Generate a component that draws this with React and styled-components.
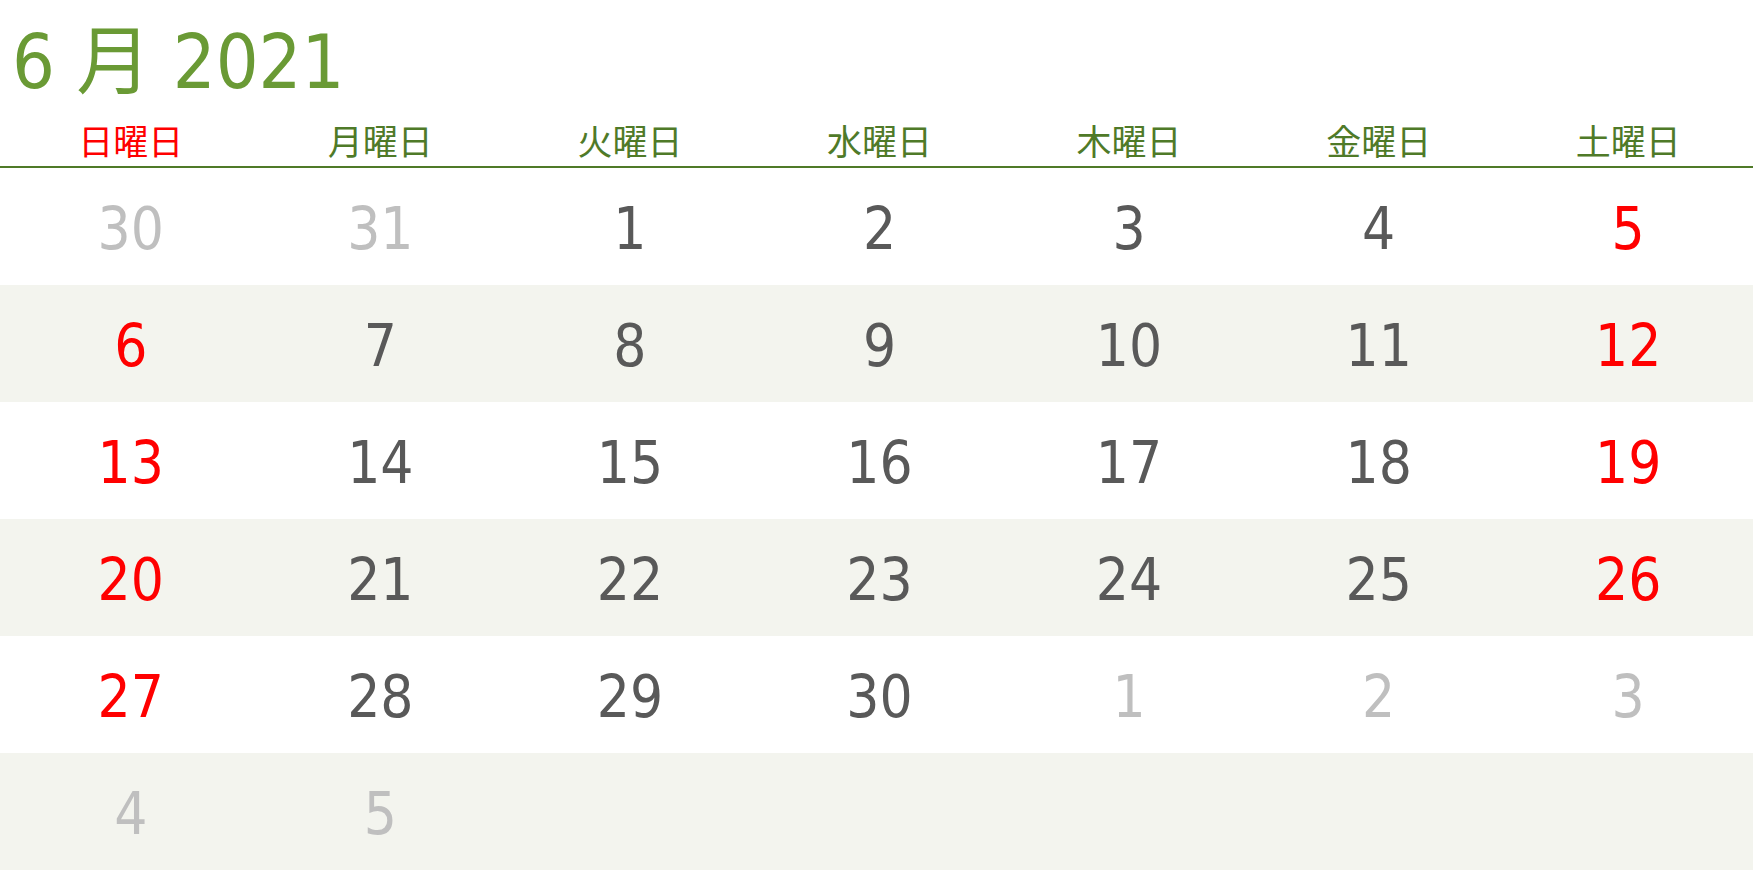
import styled, { createGlobalStyle } from 'styled-components';

const GlobalStyle = createGlobalStyle`
  html, body {
    margin: 0;
    padding: 0;
    background: #ffffff;
  }
  body {
    font-family: "DejaVu Sans Condensed", "DejaVu Sans", "Noto Sans CJK JP", sans-serif;
  }
`;

const Page = styled.div`
  width: 1753px;
  height: 871px;
  overflow: hidden;
  background: #ffffff;
`;

const Title = styled.h1`
  margin: 0;
  padding-left: 12px;
  font-family: "DejaVu Sans Condensed", "DejaVu Sans", "Noto Sans CJK JP", sans-serif;
  font-stretch: condensed;
  font-weight: 400;
  font-size: 75px;
  line-height: 125px;
  height: 125px;
  color: #6a9a35;
  white-space: pre;
`;

const Week = styled.div`
  display: grid;
  grid-template-columns: repeat(7, 1fr);
  padding-left: 6px;
  height: 41px;
  border-bottom: 2px solid #4f7a28;
`;

const DayName = styled.div`
  text-align: center;
  font-family: "Noto Sans CJK JP", sans-serif;
  font-size: 35px;
  line-height: 30px;
  color: ${(p) => (p.$sun ? '#ff0000' : '#4f7a28')};
`;

const Row = styled.div`
  display: grid;
  grid-template-columns: repeat(7, 1fr);
  padding-left: 6px;
  height: 117px;
  align-items: center;
  background: ${(p) => (p.$shade ? '#f3f4ee' : '#ffffff')};
`;

const Day = styled.div`
  text-align: center;
  font-family: "DejaVu Sans Condensed", "DejaVu Sans", sans-serif;
  font-stretch: condensed;
  font-size: 58px;
  line-height: 1;
  padding-top: 5px;
  color: ${(p) =>
    p.$muted ? '#bfbfbf' : p.$red ? '#ff0000' : '#595959'};
`;

const dayNames = ['日曜日', '月曜日', '火曜日', '水曜日', '木曜日', '金曜日', '土曜日'];

// [number, in-month]
const weeks = [
  [[30, false], [31, false], [1, true], [2, true], [3, true], [4, true], [5, true]],
  [[6, true], [7, true], [8, true], [9, true], [10, true], [11, true], [12, true]],
  [[13, true], [14, true], [15, true], [16, true], [17, true], [18, true], [19, true]],
  [[20, true], [21, true], [22, true], [23, true], [24, true], [25, true], [26, true]],
  [[27, true], [28, true], [29, true], [30, true], [1, false], [2, false], [3, false]],
  [[4, false], [5, false], null, null, null, null, null],
];

export default function App() {
  return (
    <Page>
      <GlobalStyle />
      <Title>6 月 2021</Title>
      <Week>
        {dayNames.map((d, i) => (
          <DayName key={d} $sun={i === 0}>
            {d}
          </DayName>
        ))}
      </Week>
      {weeks.map((w, r) => (
        <Row key={r} $shade={r % 2 === 1}>
          {w.map((c, i) =>
            c ? (
              <Day key={i} $muted={!c[1]} $red={i === 0 || i === 6}>
                {c[0]}
              </Day>
            ) : (
              <Day key={i} />
            )
          )}
        </Row>
      ))}
    </Page>
  );
}
